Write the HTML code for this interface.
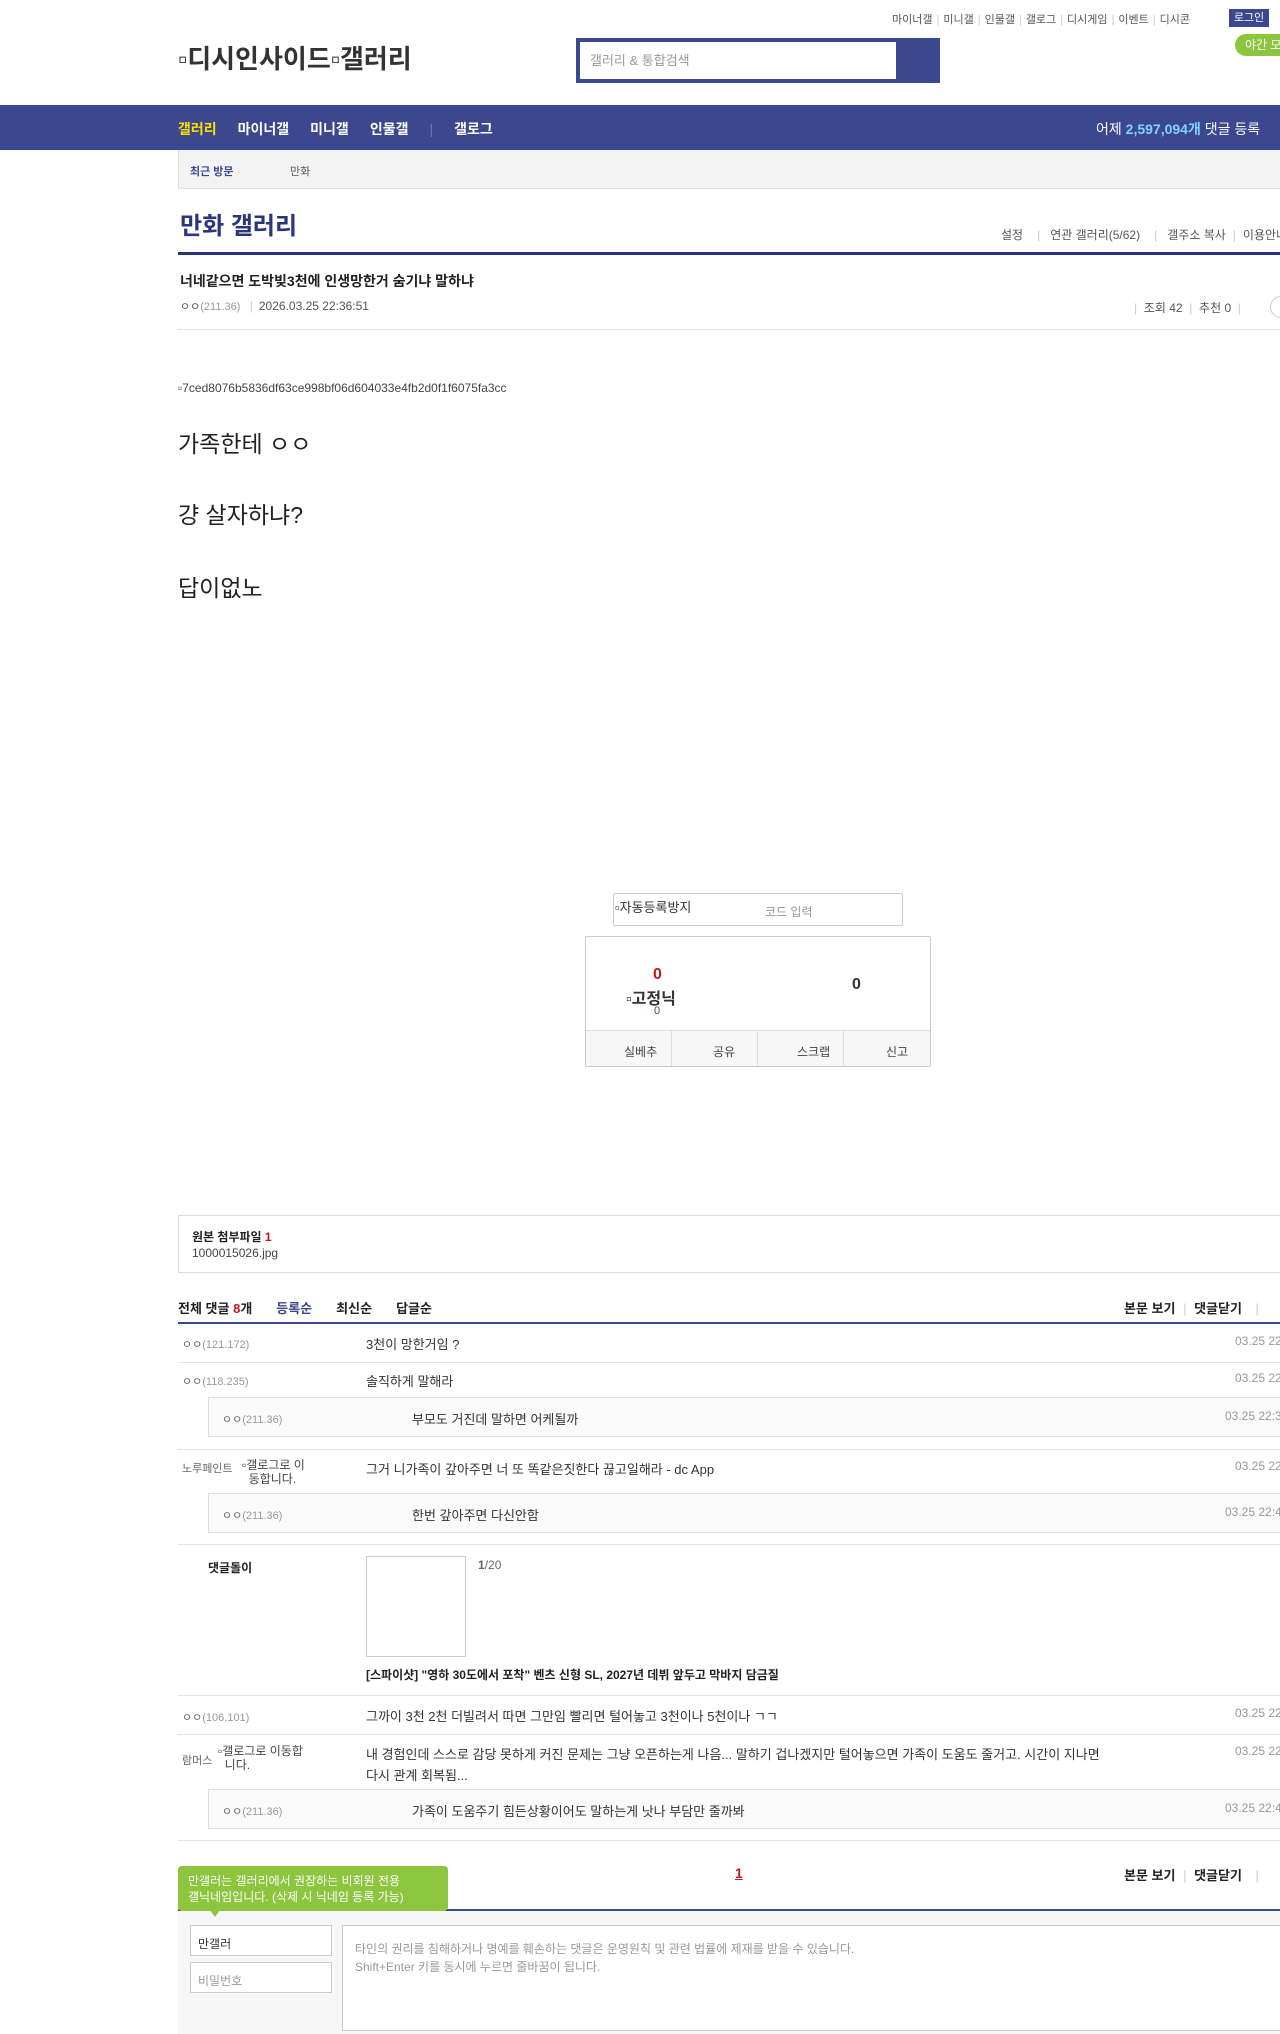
<!DOCTYPE html>
<html><head><meta charset="utf-8">
<style>
*{margin:0;padding:0;box-sizing:border-box}
html,body{width:1280px;height:2034px;overflow:hidden;background:#fff;font-family:"Liberation Sans","Noto Sans CJK KR",sans-serif;color:#333;font-size:13px}
.a{position:absolute;white-space:nowrap}
.g{color:#999}
.d{color:#999;font-size:12px}
.line{position:absolute;left:178px;right:0;height:1px;background:#e5e5e5}
.bx{position:absolute;border:1px solid #ccc}
.sp{color:#ccc;margin:0 4px}
.nv span{margin-right:21px}
.ch span{margin-left:24px}
</style></head><body>
<!-- top links -->
<div class="a" style="top:11px;left:892px;font-size:11px;color:#555">마이너갤<span class="sp">|</span>미니갤<span class="sp">|</span>인물갤<span class="sp">|</span>갤로그<span class="sp">|</span>디시게임<span class="sp">|</span>이벤트<span class="sp">|</span>디시콘</div>
<div class="a" style="top:9px;left:1229px;width:40px;height:18px;background:#3b4890;color:#fff;font-size:11px;text-align:center;line-height:18px">로그인</div>
<div class="a" style="top:34px;left:1235px;width:60px;height:22px;background:#8cc63f;color:#fff;font-size:12px;line-height:22px;padding-left:10px;border-radius:11px">야간 모드</div>
<div class="a" style="top:39px;left:178px;font-size:26px;font-weight:bold;color:#333">▫디시인사이드▫갤러리</div>
<div class="a" style="top:38px;left:576px;width:364px;height:45px;background:#3b4890"></div>
<div class="a" style="top:42px;left:580px;width:316px;height:37px;background:#fff;color:#999;font-size:13px;line-height:37px;padding-left:10px">갤러리 &amp; 통합검색</div>
<!-- nav -->
<div class="a" style="top:105px;left:0;width:1280px;height:45px;background:#3b4890"></div>
<div class="a nv" style="top:119px;left:178px;font-size:14px;font-weight:bold;color:#fff"><span style="color:#ffde00">갤러리</span><span>마이너갤</span><span>미니갤</span><span>인물갤</span><span style="color:#6b76b0;font-weight:normal">|</span>갤로그</div>
<div class="a" style="top:119px;left:1096px;font-size:14px;color:#fff">어제 <b style="color:#7fd3ff">2,597,094개</b> 댓글 등록</div>
<!-- recent -->
<div class="a" style="top:150px;left:178px;width:1110px;height:39px;background:#f3f3f3;border:1px solid #ddd;border-top:0"></div>
<div class="a" style="top:163px;left:190px;font-size:11px;font-weight:bold;color:#3b4890">최근 방문</div>
<div class="a" style="top:163px;left:290px;font-size:11px;color:#555">만화</div>
<!-- title -->
<div class="a" style="top:206px;left:180px;font-size:24px;font-weight:bold;color:#29367c">만화 갤러리</div>
<div class="a" style="top:226px;left:1001px;font-size:12px;color:#555">설정<span class="sp" style="margin:0 10px 0 14px">|</span>연관 갤러리(5/62)<span class="sp" style="margin:0 10px 0 14px">|</span>갤주소 복사<span class="sp" style="margin:0 7px">|</span>이용안내</div>
<div class="a" style="top:252px;left:178px;width:1110px;height:3px;background:#29367c"></div>
<div class="a" style="top:271px;left:180px;font-size:14px;font-weight:bold;color:#222">너네같으면 도박빚3천에 인생망한거 숨기냐 말하냐</div>
<div class="a" style="top:298px;left:180px;font-size:12px;color:#555"><span style="font-size:11px">ㅇㅇ</span><span class="g" style="font-size:11px">(211.36)</span> <span style="color:#ccc;margin:0 6px">|</span>2026.03.25 22:36:51</div>
<div class="a" style="top:299px;left:1134px;font-size:12px;color:#555"><span style="color:#ccc">|</span> &nbsp;조회 42 &nbsp;<span style="color:#ccc">|</span> &nbsp;추천 0 &nbsp;<span style="color:#ccc">|</span></div>
<div class="a" style="top:296px;left:1270px;width:24px;height:22px;border:1px solid #ccc;border-radius:11px"></div>
<div class="line" style="top:329px"></div>
<!-- body -->
<div class="a" style="top:381px;left:178px;font-size:12px;color:#444">▫7ced8076b5836df63ce998bf06d604033e4fb2d0f1f6075fa3cc</div>
<div class="a" style="top:425px;left:178px;font-size:23px;color:#222">가족한테 ㅇㅇ</div>
<div class="a" style="top:496px;left:178px;font-size:23px;color:#222">걍 살자하냐?</div>
<div class="a" style="top:569px;left:178px;font-size:23px;color:#222">답이없노</div>
<!-- captcha -->
<div class="bx" style="top:893px;left:613px;width:290px;height:33px;border-radius:2px"></div>
<div class="a" style="top:897px;left:615px;font-size:13px;color:#333">▫자동등록방지</div>
<div class="a" style="top:903px;left:765px;font-size:12px;color:#999">코드 입력</div>
<!-- recommend -->
<div class="bx" style="top:936px;left:585px;width:346px;height:131px;border-radius:2px"></div>
<div class="a" style="top:966px;left:653px;font-size:16px;font-weight:bold;color:#c4171c">0</div>
<div class="a" style="top:985px;left:626px;font-size:16px;font-weight:bold;color:#333">▫고정닉</div>
<div class="a" style="top:1005px;left:654px;font-size:11px;color:#3b4890">0</div>
<div class="a" style="top:976px;left:852px;font-size:16px;font-weight:bold;color:#333">0</div>
<div class="a" style="top:1030px;left:586px;width:344px;height:36px;background:#f7f7f7;border-top:1px solid #ddd"></div>
<div class="a" style="top:1030px;left:671px;width:1px;height:36px;background:#ddd"></div>
<div class="a" style="top:1030px;left:757px;width:1px;height:36px;background:#ddd"></div>
<div class="a" style="top:1030px;left:843px;width:1px;height:36px;background:#ddd"></div>
<div class="a" style="top:1043px;left:624px;font-size:12px;color:#444">실베추</div>
<div class="a" style="top:1043px;left:713px;font-size:12px;color:#444">공유</div>
<div class="a" style="top:1043px;left:797px;font-size:12px;color:#444">스크랩</div>
<div class="a" style="top:1043px;left:886px;font-size:12px;color:#444">신고</div>
<!-- attach -->
<div class="bx" style="top:1215px;left:178px;width:1120px;height:58px;border-color:#ddd"></div>
<div class="a" style="top:1228px;left:192px;font-size:12px;font-weight:bold;color:#222">원본 첨부파일 <span style="color:#c4171c">1</span></div>
<div class="a" style="top:1246px;left:192px;font-size:12px;color:#444">1000015026.jpg</div>
<!-- comment header -->
<div class="a ch" style="top:1298px;left:178px;font-size:13px;font-weight:bold;color:#222">전체 댓글 <b style="color:#c4171c">8</b>개<span style="color:#3b4890">등록순</span><span>최신순</span><span>답글순</span></div>
<div class="a" style="top:1298px;left:1124px;font-size:13px;font-weight:bold;color:#222">본문 보기 <span style="color:#ccc;font-weight:normal;margin:0 4px">|</span> 댓글닫기 <span style="color:#ccc;font-weight:normal;margin-left:10px">|</span></div>
<div class="a" style="top:1322px;left:178px;width:1110px;height:2px;background:#3b4890"></div>
<!-- comments -->
<div class="a" style="top:1336px;left:182px;font-size:11px;color:#666">ㅇㅇ<span class="g">(121.172)</span></div>
<div class="a" style="top:1334px;left:366px">3천이 망한거임 ?</div>
<div class="a d" style="top:1334px;left:1235px">03.25 22:36:52</div>
<div class="line" style="top:1362px"></div>
<div class="a" style="top:1373px;left:182px;font-size:11px;color:#666">ㅇㅇ<span class="g">(118.235)</span></div>
<div class="a" style="top:1371px;left:366px">솔직하게 말해라</div>
<div class="a d" style="top:1371px;left:1235px">03.25 22:37:10</div>
<div class="a" style="top:1397px;left:208px;width:1100px;height:40px;background:#fafafa;border:1px solid #ddd"></div>
<div class="a" style="top:1411px;left:222px;font-size:11px;color:#666">ㅇㅇ<span class="g">(211.36)</span></div>
<div class="a" style="top:1409px;left:412px">부모도 거진데 말하면 어케될까</div>
<div class="a d" style="top:1409px;left:1225px">03.25 22:38:01</div>
<div class="line" style="top:1449px"></div>
<div class="a" style="top:1462px;left:182px;font-size:11px;color:#666;line-height:14px">노루페인트</div>
<div class="a" style="top:1458px;left:242px;font-size:12px;color:#444;line-height:14px">▫갤로그로 이<br>&nbsp;&nbsp;동합니다.</div>
<div class="a" style="top:1459px;left:366px">그거 니가족이 갚아주면 너 또 똑같은짓한다 끊고일해라 - dc App</div>
<div class="a d" style="top:1459px;left:1235px">03.25 22:39:40</div>
<div class="a" style="top:1493px;left:208px;width:1100px;height:40px;background:#fafafa;border:1px solid #ddd"></div>
<div class="a" style="top:1507px;left:222px;font-size:11px;color:#666">ㅇㅇ<span class="g">(211.36)</span></div>
<div class="a" style="top:1505px;left:412px">한번 갚아주면 다신안함</div>
<div class="a d" style="top:1505px;left:1225px">03.25 22:40:11</div>
<div class="line" style="top:1544px"></div>
<div class="a" style="top:1559px;left:208px;font-size:12px;font-weight:bold;color:#222">댓글돌이</div>
<div class="bx" style="top:1556px;left:366px;width:100px;height:101px"></div>
<div class="a" style="top:1558px;left:478px;font-size:12px;color:#666"><b>1</b>/20</div>
<div class="a" style="top:1666px;left:366px;font-size:12px;font-weight:bold;color:#222">[스파이샷] "영하 30도에서 포착" 벤츠 신형 SL, 2027년 데뷔 앞두고 막바지 담금질</div>
<div class="line" style="top:1695px"></div>
<div class="a" style="top:1709px;left:182px;font-size:11px;color:#666">ㅇㅇ<span class="g">(106.101)</span></div>
<div class="a" style="top:1706px;left:366px">그까이 3천 2천 더빌려서 따면 그만임 빨리면 털어놓고 3천이나 5천이나 ㄱㄱ</div>
<div class="a d" style="top:1706px;left:1235px">03.25 22:41:00</div>
<div class="line" style="top:1734px"></div>
<div class="a" style="top:1752px;left:182px;font-size:11px;color:#666">람머스</div>
<div class="a" style="top:1744px;left:218px;font-size:12px;color:#444;line-height:14px">▫갤로그로 이동합<br>&nbsp;&nbsp;니다.</div>
<div class="a" style="top:1744px;left:366px;line-height:21px">내 경험인데 스스로 감당 못하게 커진 문제는 그냥 오픈하는게 나음... 말하기 겁나겠지만 털어놓으면 가족이 도움도 줄거고. 시간이 지나면<br>다시 관계 회복됨...</div>
<div class="a d" style="top:1744px;left:1235px">03.25 22:42:00</div>
<div class="a" style="top:1789px;left:208px;width:1100px;height:40px;background:#fafafa;border:1px solid #ddd"></div>
<div class="a" style="top:1803px;left:222px;font-size:11px;color:#666">ㅇㅇ<span class="g">(211.36)</span></div>
<div class="a" style="top:1801px;left:412px">가족이 도움주기 힘든상황이어도 말하는게 낫나 부담만 줄까봐</div>
<div class="a d" style="top:1801px;left:1225px">03.25 22:43:00</div>
<div class="line" style="top:1840px"></div>
<!-- paging -->
<div class="a" style="top:1865px;left:735px;font-size:14px;font-weight:bold;color:#c4171c;text-decoration:underline">1</div>
<div class="a" style="top:1865px;left:1124px;font-size:13px;font-weight:bold;color:#222">본문 보기 <span style="color:#ccc;font-weight:normal;margin:0 4px">|</span> 댓글닫기 <span style="color:#ccc;font-weight:normal;margin-left:10px">|</span></div>
<div class="a" style="top:1909px;left:178px;width:1110px;height:2px;background:#3b4890"></div>
<div class="a" style="top:1911px;left:178px;width:1110px;height:123px;background:#f7f7f7"></div>
<div class="a" style="top:1866px;left:178px;width:270px;height:45px;background:#8cc63f;border-radius:4px;color:#fff;font-size:12px;line-height:16px;padding:7px 10px">만갤러는 갤러리에서 권장하는 비회원 전용<br>갤닉네임입니다. (삭제 시 닉네임 등록 가능)</div>
<div class="a" style="top:1910px;left:210px;width:0;height:0;border-left:5px solid transparent;border-right:5px solid transparent;border-top:7px solid #8cc63f"></div>
<div class="bx" style="top:1925px;left:190px;width:142px;height:31px;background:#fff;padding:9px 7px;font-size:12px;color:#333">만갤러</div>
<div class="bx" style="top:1962px;left:190px;width:142px;height:31px;background:#fff;padding:9px 7px;font-size:12px;color:#999">비밀번호</div>
<div class="bx" style="top:1925px;left:342px;width:960px;height:106px;background:#fff;padding:14px 12px;font-size:12px;color:#999;line-height:18px;white-space:nowrap">타인의 권리를 침해하거나 명예를 훼손하는 댓글은 운영원칙 및 관련 법률에 제재를 받을 수 있습니다.<br>Shift+Enter 키를 동시에 누르면 줄바꿈이 됩니다.</div>
</body></html>
